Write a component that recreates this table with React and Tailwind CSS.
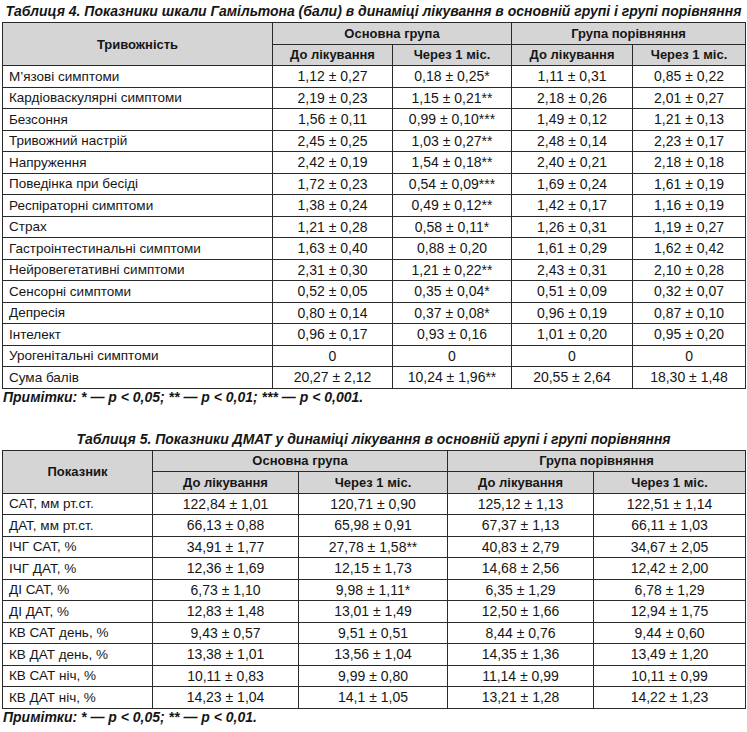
const t4 = [
  ["М’язові симптоми", "1,12 ± 0,27", "0,18 ± 0,25*", "1,11 ± 0,31", "0,85 ± 0,22"],
  ["Кардіоваскулярні симптоми", "2,19 ± 0,23", "1,15 ± 0,21**", "2,18 ± 0,26", "2,01 ± 0,27"],
  ["Безсоння", "1,56 ± 0,11", "0,99 ± 0,10***", "1,49 ± 0,12", "1,21 ± 0,13"],
  ["Тривожний настрій", "2,45 ± 0,25", "1,03 ± 0,27**", "2,48 ± 0,14", "2,23 ± 0,17"],
  ["Напруження", "2,42 ± 0,19", "1,54 ± 0,18**", "2,40 ± 0,21", "2,18 ± 0,18"],
  ["Поведінка при бесіді", "1,72 ± 0,23", "0,54 ± 0,09***", "1,69 ± 0,24", "1,61 ± 0,19"],
  ["Респіраторні симптоми", "1,38 ± 0,24", "0,49 ± 0,12**", "1,42 ± 0,17", "1,16 ± 0,19"],
  ["Страх", "1,21 ± 0,28", "0,58 ± 0,11*", "1,26 ± 0,31", "1,19 ± 0,27"],
  ["Гастроінтестинальні симптоми", "1,63 ± 0,40", "0,88 ± 0,20", "1,61 ± 0,29", "1,62 ± 0,42"],
  ["Нейровегетативні симптоми", "2,31 ± 0,30", "1,21 ± 0,22**", "2,43 ± 0,31", "2,10 ± 0,28"],
  ["Сенсорні симптоми", "0,52 ± 0,05", "0,35 ± 0,04*", "0,51 ± 0,09", "0,32 ± 0,07"],
  ["Депресія", "0,80 ± 0,14", "0,37 ± 0,08*", "0,96 ± 0,19", "0,87 ± 0,10"],
  ["Інтелект", "0,96 ± 0,17", "0,93 ± 0,16", "1,01 ± 0,20", "0,95 ± 0,20"],
  ["Урогенітальні симптоми", "0", "0", "0", "0"],
  ["Сума балів", "20,27 ± 2,12", "10,24 ± 1,96**", "20,55 ± 2,64", "18,30 ± 1,48"],
];

const t5 = [
  ["САТ, мм рт.ст.", "122,84 ± 1,01", "120,71 ± 0,90", "125,12 ± 1,13", "122,51 ± 1,14"],
  ["ДАТ, мм рт.ст.", "66,13 ± 0,88", "65,98 ± 0,91", "67,37 ± 1,13", "66,11 ± 1,03"],
  ["ІЧГ САТ, %", "34,91 ± 1,77", "27,78 ± 1,58**", "40,83 ± 2,79", "34,67 ± 2,05"],
  ["ІЧГ ДАТ, %", "12,36 ± 1,69", "12,15 ± 1,73", "14,68 ± 2,56", "12,42 ± 2,00"],
  ["ДІ САТ, %", "6,73 ± 1,10", "9,98 ± 1,11*", "6,35 ± 1,29", "6,78 ± 1,29"],
  ["ДІ ДАТ, %", "12,83 ± 1,48", "13,01 ± 1,49", "12,50 ± 1,66", "12,94 ± 1,75"],
  ["КВ САТ день, %", "9,43 ± 0,57", "9,51 ± 0,51", "8,44 ± 0,76", "9,44 ± 0,60"],
  ["КВ ДАТ день, %", "13,38 ± 1,01", "13,56 ± 1,04", "14,35 ± 1,36", "13,49 ± 1,20"],
  ["КВ САТ ніч, %", "10,11 ± 0,83", "9,99 ± 0,80", "11,14 ± 0,99", "10,11 ± 0,99"],
  ["КВ ДАТ ніч, %", "14,23 ± 1,04", "14,1 ± 1,05", "13,21 ± 1,28", "14,22 ± 1,23"],
];

const cell = "border border-[#2a2a2a] p-0 h-[21.5px] leading-none";
const head = "border border-[#2a2a2a] p-0 h-[21.5px] leading-none bg-[#d5d5d5] font-bold text-[13px] text-center";

function DataTable({ firstHead, widths, rows }) {
  return (
    <table className="ml-[2px] w-[743px] table-fixed border-collapse">
      <colgroup>
        {widths.map((w, i) => (
          <col key={i} style={{ width: w }} />
        ))}
      </colgroup>
      <thead>
        <tr>
          <th rowSpan={2} className={head}>{firstHead}</th>
          <th colSpan={2} className={head}>Основна група</th>
          <th colSpan={2} className={head}>Група порівняння</th>
        </tr>
        <tr>
          <th className={head}>До лікування</th>
          <th className={head}>Через 1 міс.</th>
          <th className={head}>До лікування</th>
          <th className={head}>Через 1 міс.</th>
        </tr>
      </thead>
      <tbody>
        {rows.map((r, i) => (
          <tr key={i}>
            {r.map((v, j) => (
              <td
                key={j}
                className={j === 0 ? `${cell} pl-[6px] text-left text-[13.5px]` : `${cell} text-center text-[14px]`}
              >
                {v}
              </td>
            ))}
          </tr>
        ))}
      </tbody>
    </table>
  );
}

export default function App() {
  return (
    <div className="w-[747px] h-[732px] bg-white text-[#161616] text-[13px] font-['Liberation_Sans',Arial,sans-serif]">
      <div className="h-[22px] flex items-center justify-center font-bold italic text-[14px] whitespace-nowrap">
        Таблиця 4. Показники шкали Гамільтона (бали) в динаміці лікування в основній групі і групі порівняння
      </div>
      <DataTable firstHead="Тривожність" widths={[270, 120, 119, 121, 113]} rows={t4} />
      <div className="h-[18px] pl-[3px] flex items-center font-bold italic text-[14px]">
        Примітки: * — p &lt; 0,05; ** — p &lt; 0,01; *** — p &lt; 0,001.
      </div>
      <div className="h-[23px]" />
      <div className="h-[20px] flex items-center justify-center font-bold italic text-[14px]">
        Таблиця 5. Показники ДМАТ у динаміці лікування в основній групі і групі порівняння
      </div>
      <DataTable firstHead="Показник" widths={[150, 146, 149, 146, 152]} rows={t5} />
      <div className="h-[18px] pl-[3px] flex items-center font-bold italic text-[14px]">
        Примітки: * — p &lt; 0,05; ** — p &lt; 0,01.
      </div>
    </div>
  );
}
